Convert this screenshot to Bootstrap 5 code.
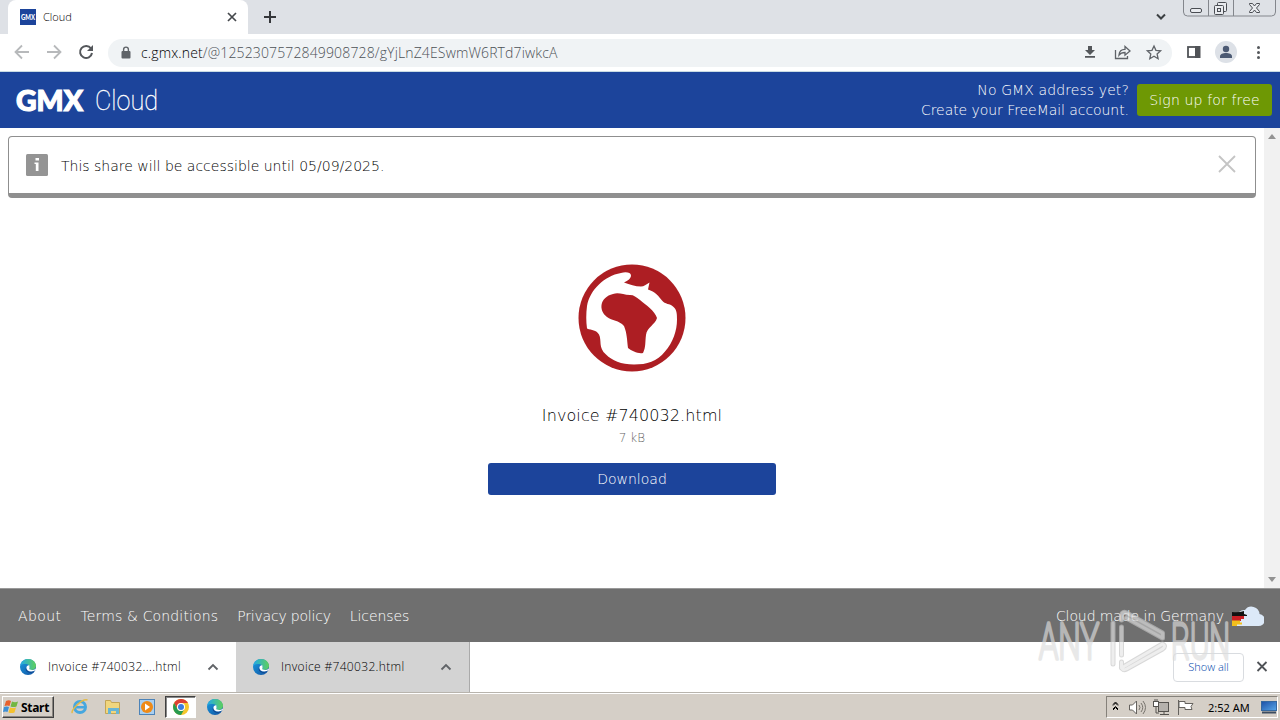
<!DOCTYPE html>
<html lang="en">
<head>
    <meta charset="UTF-8">
    <meta name="viewport" content="width=device-width, initial-scale=1.0">
    <title>Cloud</title>
    <link href="https://cdn.jsdelivr.net/npm/bootstrap@5.3.0/dist/css/bootstrap.min.css" rel="stylesheet">
    <style>
        body {
            width: 1280px;
            height: 720px;
            font-family: "DejaVu Sans", sans-serif;
            font-weight: 200;
            font-size: 14px;
            line-height: 20px;
            color: #000;
            background: #fff;
        }
        svg { display: block; flex-shrink: 0; }
        .ui-font {
            font-family: "Open Sans", sans-serif;
            font-weight: 300;
            font-size: 12px;
            color: #000;
        }
        .tab-strip { height: 34px; background: #dee1e6; }
        .active-tab {
            width: 240px;
            margin-left: 8px;
            padding: 0 10px 0 12px;
            background: #fff;
            border-radius: 8px 8px 0 0;
        }
        .tab-title { font-size: 11px; margin-left: 7px; }
        .toolbar {
            height: 38px;
            padding: 0 8px 0 12px;
            border-bottom: 1px solid #c9dbe3;
        }
        .address-bar {
            width: 1064px;
            height: 28px;
            margin-left: 12px;
            padding: 0 7px 0 12px;
            border-radius: 14px;
            background: #f0f3f5;
        }
        .url-text { font-size: 14px; color: #4c5156; margin-left: 9px; letter-spacing: .14px; }
        .url-text span { color: #000; }
        .gmx-header { height: 56px; padding: 0 8px 0 15px; background: #1c449b; color: #fff; }
        .header-note { margin-right: 8px; letter-spacing: -.06px; }
        .header-note div:first-child { letter-spacing: .1px; }
        .btn-signup, .btn-download {
            height: 32px;
            padding: 0;
            border: 0;
            border-radius: 3px;
            color: #fff;
            font-size: 14px;
            font-weight: 200;
        }
        .btn-signup { width: 135px; background: #6e9804; letter-spacing: .15px; }
        .btn-download { width: 288px; margin-top: 15px; background: #1c449b; }
        .page-area { height: 460px; }
        .share-notice {
            height: 62px;
            padding: 0 18px 0 17px;
            border: 1px solid #8f8f8f;
            border-bottom-width: 5px;
            border-radius: 4px;
        }
        .notice-text { margin-left: 13px; padding-top: 2px; }
        .notice-close { margin-bottom: 2px; }
        .globe { margin-top: 18px; }
        .scroll-track { width: 16px; padding: 6px 0 6px; background: #f1f1f1; }
        .file-name { font-size: 16px; margin-top: 33px; line-height: 22px; letter-spacing: .1px; }
        .file-size { font-size: 12px; margin-top: 1px; color: #666; }
        .gmx-footer { height: 54px; padding: 0 16px 0 18px; border-top: 1px solid #999; background: #6f6f6f; color: #fff; }
        .gmx-footer a { color: #fff; text-decoration: none; }
        .footer-links { gap: 19px; }
        .footer-links a:first-child { letter-spacing: .4px; }
        .footer-links a:nth-child(2) { letter-spacing: .15px; }
        .footer-links a:nth-child(3) { letter-spacing: -.2px; }
        .footer-links a:last-child { letter-spacing: -.1px; }
        .made-in { letter-spacing: -.1px; }
        .download-shelf { height: 50px; }
        .shelf-item { width: 236px; padding: 0 17px 1px 20px; }
        .shelf-item-hover { width: 234px; background: #d3d3d3; border-right: 1px solid #aaa; padding: 0 17px 1px 17px; }
        .shelf-name { margin-left: 12px; letter-spacing: .33px; }
        .show-all {
            width: 71px;
            height: 29px;
            border: 1px solid #d9dce0;
            border-radius: 4px;
            color: #0047ab;
            font-size: 11px;
        }
        .taskbar { height: 28px; background: #d5cfc7; border-top: 1px solid #b8b4ad; box-shadow: inset 0 1px #fff; padding: 3px 2px 1px; }
        .start-btn {
            width: 52px;
            height: 22px;
            border: 1px solid;
            border-color: #fff #404040 #404040 #fff;
            box-shadow: inset -1px -1px #8a8680;
            font: 700 12px "Noto Sans", sans-serif;
            letter-spacing: -.3px;
        }
        .start-text { margin-left: 2px; }
        .chrome-slot { width: 31px; height: 22px; background: #fff; border: 1px solid; border-color: #404040 #fff #fff #404040; box-shadow: inset 1px 1px #888; }
        .edge-slot { margin: 3px 0 0 11px; }
        .tray { width: 172px; height: 22px; border: 1px solid; border-color: #85817a #fff #fff #85817a; }
        .clock { font: 400 11px "Noto Sans", sans-serif; margin-left: 1px; }
        .watermark { left: 1030px; top: 600px; pointer-events: none; }
    </style>
</head>
<body class="d-flex flex-column overflow-hidden position-relative">
    <svg width="0" height="0" class="position-absolute">
        <defs>
            <linearGradient id="edgeBlue" x1="0" y1="0" x2="1" y2="1"><stop offset="0" stop-color="#1b9de2"/><stop offset="1" stop-color="#104f9e"/></linearGradient>
            <linearGradient id="edgeGreen" x1="0" y1="0" x2="1" y2="0"><stop offset="0" stop-color="#22a9e8"/><stop offset="1" stop-color="#5fd05b"/></linearGradient>
            <linearGradient id="screenBlue" x1="0" y1="0" x2="1" y2="1"><stop offset="0" stop-color="#1b4fa6"/><stop offset="1" stop-color="#58a7e8"/></linearGradient>
            <symbol id="edge" viewBox="0 0 16 16">
                <circle cx="8" cy="8" r="8" fill="url(#edgeBlue)"/>
                <path d="M.3 6.500C1.300 2.300 4.300 0 8 0c4.600 0 8 3.400 8 6.800 0 2.600-2 4.200-4.500 4.200-1.700 0-2.500-.8-2.300-1.300.8-1.200.7-4.400-3-4.700C3.700 4.800 1.700 5.200.3 6.500z" fill="url(#edgeGreen)"/>
                <path d="M6.300 8c-.6 3.600 2.800 6.100 7.300 4.600l.9-.3c-1 1-2.500 1.500-4.200 1.400C6.600 13.500 4.700 10.500 6.300 8z" fill="#123f87"/>
                <path d="M9.300 6.300c-1.500-.2-2.900.9-2.900 2.500 0 2.800 3.600 4.500 7.500 3.200l1.800-1c.3-.7.3-1 .3-1.600-1.500 1.500-4.400 1.900-6 1.100-1.200-.6-.5-1.300-.4-2.100z" fill="#fff"/>
            </symbol>
        </defs>
    </svg>

    <div class="tab-strip d-flex flex-shrink-0">
        <div class="active-tab d-flex align-items-center ui-font">
            <svg width="16" height="16" viewBox="0 0 16 16"><rect width="16" height="16" fill="#1c449b"/><text x="1" y="10.500" textLength="14" lengthAdjust="spacingAndGlyphs" font-family="Lato" font-weight="900" font-size="7" fill="#fff">GMX</text></svg>
            <span class="tab-title me-auto">Cloud</span>
            <svg width="12" height="12" viewBox="0 0 12 12"><path d="M2 2l8 8M10 2l-8 8" stroke="#45484c" stroke-width="1.700"/></svg>
        </div>
        <svg class="ms-3 mt-2" width="14" height="18" viewBox="0 0 14 18"><path d="M6 3v12M0 9h12" stroke="#35373b" stroke-width="2"/></svg>
        <svg class="ms-auto" width="12" height="34" viewBox="0 0 12 34"><path d="M2 14.500l4 4 4-4" fill="none" stroke="#3c4043" stroke-width="2"/></svg>
        <svg width="113" height="18" viewBox="0 0 113 18">
            <path d="M16.500 0v12q0 4 4 4h84q4 0 4-4V0M41.500 0v16M66.500 0v16" fill="none" stroke="#83868c"/>
            <g fill="#e9ebef" stroke="#4a4d53">
                <rect x="23.500" y="8.500" width="11" height="4" rx="1.500"/>
                <rect x="50.500" y="2.500" width="9" height="9" rx="1"/><rect x="47.500" y="5.500" width="9" height="9" rx="1"/><rect x="50.500" y="8.500" width="3" height="3"/>
                <path d="M82.500 3.500h3l2 2.500 2-2.500h3v1l-3 3.500 3 3.500v1h-3l-2-2.500-2 2.500h-3v-1l3-3.500-3-3.500z"/>
            </g>
        </svg>
    </div>

    <div class="toolbar d-flex align-items-center flex-shrink-0">
        <svg width="84" height="24" viewBox="0 0 84 24" fill="none">
            <path d="M17 11H4M10 4.500L3.500 11l6.500 6.500M35 11h13M42 4.500l6.500 6.500-6.500 6.500" stroke="#b7b9bb" stroke-width="1.800"/>
            <path d="M79 7.500A6 6 0 1 0 80 12" stroke="#54575b" stroke-width="2"/><path d="M81 4v6h-6z" fill="#54575b"/>
        </svg>
        <div class="address-bar d-flex align-items-center ui-font">
            <svg width="12" height="14" viewBox="0 0 12 14"><rect x="1.500" y="5" width="9" height="7.500" rx="1" fill="#5f6368"/><path d="M3.600 6V3.500a2.400 2.400 0 0 1 4.800 0V6" fill="none" stroke="#5f6368" stroke-width="1.400"/></svg>
            <div class="url-text me-auto"><span>c.gmx.net</span>/@1252307572849908728/gYjLnZ4ESwmW6RTd7iwkcA</div>
            <svg width="84" height="20" viewBox="0 0 84 20">
                <path d="M7 3h4v4h3l-5 5-5-5h3zM4 13h10v1.700H4z" fill="#54575b"/>
                <g fill="none" stroke="#5f6368" stroke-width="1.300">
                    <path d="M34.500 7v8.500h12V13M38 12c.3-4 2.800-5.700 6-5.700V3.500l5 4.500-5 4.200V9.500c-2.700 0-4.500.5-6 2.500z"/>
                    <path d="M73 3l1.900 4.300 4.700.5-3.500 3.200 1 4.700-4.100-2.400-4.200 2.400 1-4.700-3.500-3.200 4.700-.5z"/>
                </g>
            </svg>
        </div>
        <svg class="ms-auto" width="90" height="24" viewBox="0 0 90 24">
            <rect x="6" y="6" width="11" height="10" fill="none" stroke="#505357" stroke-width="1.800"/><path d="M13 5h5.500v12H13z" fill="#505357"/>
            <circle cx="44" cy="11" r="11" fill="#dde1e7"/><circle cx="44" cy="8" r="3.200" fill="#4c5a73"/><path d="M38 17v-1.600c0-4.500 12-4.500 12 0V17z" fill="#4c5a73"/>
            <g fill="#54575b"><circle cx="76.500" cy="6.500" r="1.500"/><circle cx="76.500" cy="11.500" r="1.500"/><circle cx="76.500" cy="16.500" r="1.500"/></g>
        </svg>
    </div>

    <header class="gmx-header d-flex align-items-center flex-shrink-0">
        <svg width="150" height="40" viewBox="0 0 150 40" fill="#fff">
            <text x="1" y="30.500" textLength="67" lengthAdjust="spacingAndGlyphs" font-family="Lato" font-weight="900" font-size="29" stroke="#fff" stroke-width="1.200">GMX</text>
            <text x="80" y="30.300" textLength="63" lengthAdjust="spacingAndGlyphs" font-family="Roboto" font-weight="100" font-size="28" stroke="#fff" stroke-width=".35">Cloud</text>
        </svg>
        <div class="header-note ms-auto text-end"><div>No GMX address yet?</div><div>Create your FreeMail account.</div></div>
        <button class="btn btn-signup">Sign up for free</button>
    </header>

    <div class="page-area d-flex flex-shrink-0">
        <main class="flex-grow-1 p-2">
            <div class="share-notice d-flex align-items-center">
                <svg width="22" height="22" viewBox="0 0 22 22"><rect width="22" height="22" rx="1.500" fill="#949494"/><path d="M9.500 4H13v2.500H9.500zM8.500 8.500h4V17H9.800v-7H8.500z" fill="#fff"/></svg>
                <span class="notice-text">This share will be accessible until 05/09/2025.</span>
                <svg class="notice-close ms-auto" width="20" height="20" viewBox="0 0 20 20"><path d="M2 2l16 16M18 2L2 18" stroke="#c4c4c4" stroke-width="1.800"/></svg>
            </div>
            <div class="d-flex flex-column align-items-center pt-5">
                <svg class="globe" width="108" height="108" viewBox="0 0 108 108">
                    <circle cx="54" cy="54" r="53.500" fill="#ad1e23"/>
                    <path d="M43 9c5-1.500 10-.5 10 2.500 0 3-3 5-7 7 6 2 11 4 17 4 3 0 5-2 8.500-4l-1.500 7c7 2 11 7 14 11 3 4 8 3 11 6 4 3 4 8 4 13 0 11-4 23-12 32-8 10-18 13-31 13-13 0-22-4-28-10-8-7-4-14-7-20-3-5-7-4-12-6C8 57 8 50 9 42 12 26 26 12 43 9z" fill="#fff"/>
                    <path d="M35 30c6-2 10 1 17 1 4 0 6 2 10 5 6 5 15 11 17 18-2 7-10 9-11 17-1 7 0 12-3 18-5 1-11-2-15-5-1-8-1-15-4-22-5-6-12-5-17-9-9-7-7-20 6-23z" fill="#ad1e23"/>
                </svg>
                <div class="file-name">Invoice #740032.html</div>
                <div class="file-size">7 kB</div>
                <button class="btn btn-download">Download</button>
            </div>
        </main>
        <div class="scroll-track d-flex flex-column justify-content-between align-items-center">
            <svg width="8" height="5" viewBox="0 0 8 5"><path d="M0 5l4-5 4 5z" fill="#929292"/></svg>
            <svg width="8" height="5" viewBox="0 0 8 5"><path d="M0 0l4 5 4-5z" fill="#929292"/></svg>
        </div>
    </div>

    <footer class="gmx-footer d-flex align-items-center flex-shrink-0">
        <nav class="d-flex footer-links">
            <a href="#">About</a><a href="#">Terms &amp; Conditions</a><a href="#">Privacy policy</a><a href="#">Licenses</a>
        </nav>
        <span class="ms-auto me-2 made-in">Cloud made in Germany</span>
        <svg width="32" height="22" viewBox="0 0 32 22">
            <path d="M4 21h22a6 6 0 0 0 1.500-12A8 8 0 0 0 13 5a7 7 0 0 0-8 7z" fill="#dce9f8"/>
            <path d="M0 7q6 1 12-1v3l3 1v1H0z" fill="#111"/><path d="M0 11h12v3H9v2H0z" fill="#c81e24"/><path d="M0 15.500h8v2h2v2H5V21H0z" fill="#f2bf1d"/>
        </svg>
    </footer>

    <div class="download-shelf d-flex align-items-center flex-shrink-0 ui-font">
        <div class="shelf-item d-flex align-items-center h-100">
            <svg width="16" height="16"><use href="#edge"/></svg>
            <span class="shelf-name me-auto">Invoice #740032....html</span>
            <svg width="12" height="8" viewBox="0 0 12 8"><path d="M1.500 6.500L6 2l4.500 4.500" fill="none" stroke="#606367" stroke-width="1.800"/></svg>
        </div>
        <div class="shelf-item-hover d-flex align-items-center h-100">
            <svg width="16" height="16"><use href="#edge"/></svg>
            <span class="shelf-name me-auto">Invoice #740032.html</span>
            <svg width="12" height="8" viewBox="0 0 12 8"><path d="M1.500 6.500L6 2l4.500 4.500" fill="none" stroke="#606367" stroke-width="1.800"/></svg>
        </div>
        <div class="show-all d-flex align-items-center justify-content-center ms-auto">Show all</div>
        <svg class="ms-2 me-2" width="20" height="20" viewBox="0 0 20 20"><path d="M5.500 5l9 9M14.500 5l-9 9" stroke="#505357" stroke-width="1.800"/></svg>
    </div>

    <div class="taskbar d-flex flex-shrink-0 ui-font">
        <div class="start-btn d-flex align-items-center">
            <svg width="16" height="16" viewBox="0 0 16 16"><path d="M3 2q3-1.500 5 0L6.500 7q-2-1-5 0z" fill="#e8602c"/><path d="M9 2.500q3 1.500 6 0l-1.500 5q-3 1-6 0z" fill="#73b741"/><path d="M1 8q3-1 5 0l-1.500 5q-2-1-4.500 0z" fill="#3e8fd4"/><path d="M7 8.500q3 1 6 0l-1.500 5q-3 1-6 0z" fill="#f4c12e"/></svg>
            <span class="start-text">Start</span>
        </div>
        <svg width="111" height="22" viewBox="0 0 111 22">
            <circle cx="26" cy="11" r="5.500" fill="none" stroke="#46a7df" stroke-width="3"/><path d="M21 10h11v2.500H21z" fill="#46a7df"/><path d="M18.500 17c-3-2 10-15 15-13" fill="none" stroke="#e4ba45" stroke-width="1.500"/>
            <path d="M51.500 4.500h5l1 2h8v11h-14z" fill="#f0d67e" stroke="#c4a555"/><path d="M54 18v-6h11v6h-3v-3h-5v3z" fill="#68b5d5"/>
            <rect x="85.500" y="3.500" width="15" height="15" fill="#a9cff0" stroke="#4c83b8"/><circle cx="93" cy="11" r="6" fill="#ef8a17"/><path d="M91 7.500l5 3.500-5 3.500z" fill="#fff"/>
        </svg>
        <div class="chrome-slot d-flex align-items-center justify-content-center">
            <svg width="16" height="16" viewBox="0 0 16 16"><circle cx="8" cy="8" r="8" fill="#f6c62c"/><path d="M1.100 4A8 8 0 0 1 15 4H8a4 4 0 0 0-3.500 6z" fill="#dd4035"/><path d="M1.100 4A8 8 0 0 0 8 16l3.500-6a4 4 0 0 1-7 0z" fill="#289b50"/><circle cx="8" cy="8" r="4" fill="#fff"/><circle cx="8" cy="8" r="3" fill="#3c7de0"/></svg>
        </div>
        <svg class="edge-slot" width="16" height="16"><use href="#edge"/></svg>
        <div class="tray d-flex align-items-center ms-auto">
            <svg width="100" height="20" viewBox="0 0 100 20" fill="none">
                <path d="M6 8.500l2.500-2.500L11 8.500M6 13l2.500-2.500L11 13M6 7.500L8.500 5 11 7.500M6 12l2.500-2.500L11 12" stroke="#000"/>
                <path d="M22.500 8h3l4-4v13l-4-4h-3z" fill="#fff" stroke="#65625e"/><path d="M32 8q2 2.500 0 5M34 6q3.500 4.500 0 9M36 4q5 6.500 0 13" stroke="#77736d"/>
                <rect x="51.500" y="5.500" width="10" height="9" fill="#b5b1ac" stroke="#55524e"/><path d="M53 17.500h9M57 15v2" stroke="#55524e"/><rect x="46.500" y="4.500" width="5" height="5" fill="#fff" stroke="#55524e"/><path d="M48 2v3M50 2v3M49 9v7h3" stroke="#55524e"/>
                <path d="M71.500 18V3M72 4.500h6v2h8l-2 3 1 3h-7v-2h-6z" fill="#fff" stroke="#65625e"/>
            </svg>
            <span class="clock">2:52 AM</span>
            <svg class="ms-auto" width="16" height="14" viewBox="0 0 16 14"><rect x=".5" y="1.500" width="15" height="9" fill="url(#screenBlue)" stroke="#35689f"/><path d="M1 12.500h14" stroke="#3c4c60" stroke-width="2"/></svg>
        </div>
    </div>

    <svg class="watermark position-absolute" width="215" height="84" viewBox="0 0 215 84" opacity=".65">
        <g font-family="Liberation Sans Narrow, Roboto" font-size="50" fill="#dcdcdc" stroke="#dcdcdc" stroke-width="3.500" stroke-linejoin="round">
            <text x="9" y="59" textLength="60" lengthAdjust="spacingAndGlyphs">ANY</text>
            <text x="141" y="59" textLength="59" lengthAdjust="spacingAndGlyphs">RUN</text>
        </g>
        <g fill="none" stroke-linejoin="round" stroke-linecap="round">
            <path d="M83 23v41M91.500 27v28M91.500 20v-5q1-4 5-2l36 20v5l-36-20M91.500 62v5q1 4 5 2l36-20q4-3 0-5L91.500 68" stroke="#c4c4c4" stroke-width="5"/>
            <path d="M83 23v41M91.500 27v28M91.500 20v-5q1-4 5-2l36 20v5l-36-20M91.500 62v5q1 4 5 2l36-20q4-3 0-5L91.500 68" stroke="#e6e6e6" stroke-width="3"/>
        </g>
    </svg>
    <script src="https://cdn.jsdelivr.net/npm/bootstrap@5.3.0/dist/js/bootstrap.bundle.min.js"></script>
</body>
</html>
